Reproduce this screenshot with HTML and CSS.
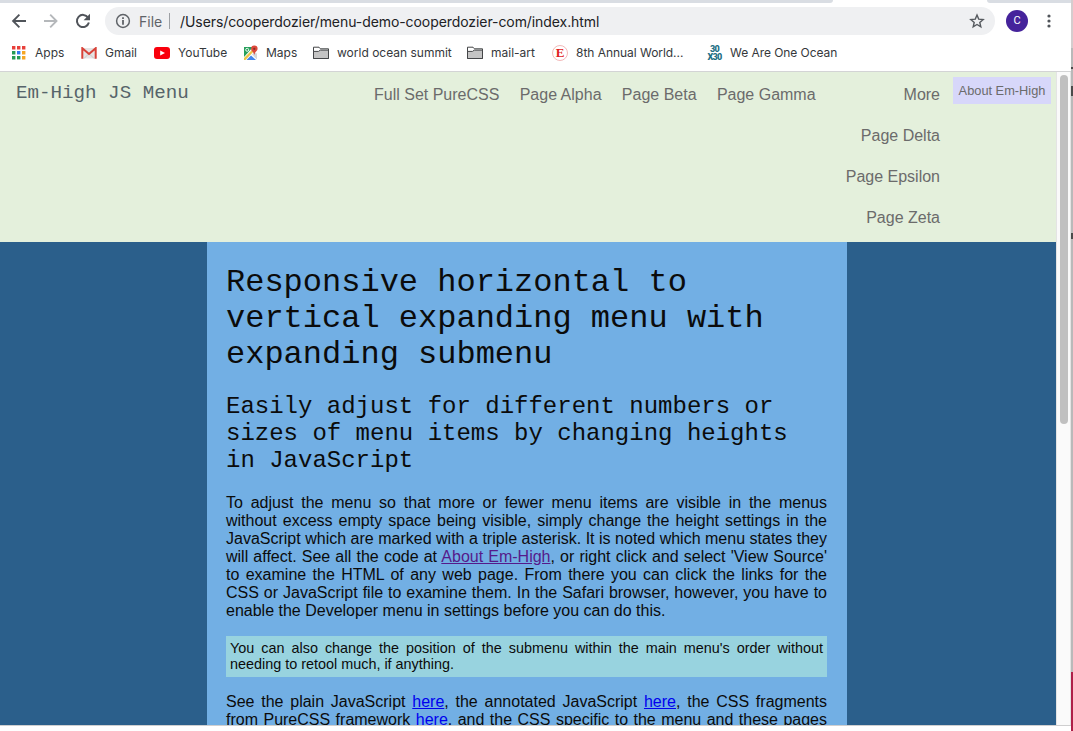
FILE: index.html
```
<!DOCTYPE html>
<html lang="en">
<head>
<meta charset="utf-8">
<title>Em-High JS Menu</title>
<link rel="stylesheet" href="styles.css">
</head>
<body>
<div class="desktop">
<div class="window">
  <div class="tabs"><span class="tab-left"></span><span class="tab-right"></span></div>
  <div class="toolbar">
    <svg class="nav-icon" width="16" height="16" viewBox="0 0 16 16" fill="none" stroke="#50545a" stroke-width="1.9"><path d="M15 8H2.6M8.4 1.7 2.1 8l6.3 6.3"/></svg>
    <svg class="nav-icon" width="16" height="16" viewBox="0 0 16 16" fill="none" stroke="#b5b8bb" stroke-width="1.9"><path d="M1 8h12.4M7.2 1.7 13.5 8l-6.3 6.3"/></svg>
    <svg class="nav-icon" width="16" height="16" viewBox="0 0 16 16" fill="none" stroke="#50545a" stroke-width="2"><path d="M13.1 4.6A6.1 6.1 0 1 0 13.9 9.6"/><path d="M15 .8v6.4H8.6z" fill="#50545a" stroke="none"/></svg>
    <div class="address">
      <svg width="16" height="16" viewBox="0 0 16 16" fill="none" stroke="#5f6368" stroke-width="1.5"><circle cx="8" cy="8" r="6.4"/><path d="M8 7v4.7M8 4.2v1.7" stroke-width="1.8"/></svg>
      <span class="scheme">File</span><span class="divider"></span><span class="path">/Users/cooperdozier/menu-demo-cooperdozier-com/index.html</span>
      <svg class="star" width="16" height="16" viewBox="0 0 16 16" fill="none" stroke="#55595e" stroke-width="1.4"><path d="m8 2 1.7 4.1 4.5.4-3.4 3 1 4.3L8 11.5l-3.8 2.3 1-4.3-3.4-3 4.5-.4z"/></svg>
    </div>
    <span class="avatar">C</span>
    <svg class="dots" width="4" height="14" viewBox="0 0 4 14" fill="#50545a"><circle cx="2" cy="2" r="1.6"/><circle cx="2" cy="7" r="1.6"/><circle cx="2" cy="12" r="1.6"/></svg>
  </div>
  <div class="bookmarks">
    <a class="bm apps"><svg width="14" height="14" viewBox="0 0 14 14"><path fill="#e8403a" d="M0 0h3.4v3.4H0zM5 0h3.4v3.4H5zM10 0h3.4v3.4H10z"/><path fill="#259b53" d="M0 5h3.4v3.4H0zM0 10h3.4v3.4H0z"/><path fill="#3079ed" d="M5 5h3.4v3.4H5z"/><path fill="#f5a623" d="M10 5h3.4v3.4H10zM10 10h3.4v3.4H10z"/><path fill="#259b53" d="M5 10h3.4v3.4H5z"/></svg><span>Apps</span></a>
    <a class="bm gmail"><svg width="16" height="12" viewBox="0 0 16 12"><path fill="#e6e4e4" d="M1 1h14v10.5H1z"/><path d="M3 11.5 8 6.5l5 5" stroke="#c9c6c6" fill="none"/><path fill="none" stroke="#d84339" stroke-width="2" d="M1.3 11.8V1.2L8 7l6.7-5.8v10.6"/></svg><span>Gmail</span></a>
    <a class="bm youtube"><svg width="16" height="12" viewBox="0 0 16 12"><rect width="16" height="12" rx="3" fill="#f9000c"/><path d="M6.2 3.4v5.2L11 6z" fill="#fff"/></svg><span>YouTube</span></a>
    <a class="bm maps"><svg width="16" height="16" viewBox="0 0 16 16"><path fill="#fff" d="M1 2h13v13H1z"/><path fill="#27a05b" d="M1 2h9L1 12z"/><path fill="#edc547" d="m1 13 9-9 1.6 1.6L2.5 15H1z"/><path fill="#4385eb" d="M3.5 15 8 10.4l5 4.6z"/><path fill="#d5d7d9" d="m9 9.5 2-2 3 1v6z"/><circle cx="4.2" cy="4.8" r="1.5" fill="none" stroke="#fff" stroke-width=".9"/><path fill="#dc493b" d="M11.3.5a3.3 3.3 0 0 0-3.2 3.3C8 6 10.8 6.7 11.3 10c.6-3.3 3.3-4 3.3-6.2A3.3 3.3 0 0 0 11.3.5z"/><circle cx="11.3" cy="3.8" r="1.1" fill="#872c26"/></svg><span>Maps</span></a>
    <a class="bm ocean"><svg width="16" height="14" viewBox="0 0 16 14"><path fill="#fff" stroke="#444648" d="M.5 12.5V1.2H6l1.4 1.6h8.1v9.7z"/><path fill="#c4c4c4" stroke="#444648" d="M.5 12.5V5.4h5l1.8-1.3h8.2v8.4z"/></svg><span>world ocean summit</span></a>
    <a class="bm mailart"><svg width="16" height="14" viewBox="0 0 16 14"><path fill="#fff" stroke="#444648" d="M.5 12.5V1.2H6l1.4 1.6h8.1v9.7z"/><path fill="#c4c4c4" stroke="#444648" d="M.5 12.5V5.4h5l1.8-1.3h8.2v8.4z"/></svg><span>mail-art</span></a>
    <a class="bm annual"><i class="e-logo">E</i><span>8th Annual World...</span></a>
    <a class="bm oneocean"><i class="x-logo"><b>30</b><b>X30</b></i><span>We Are One Ocean</span></a>
  </div>
  <div class="viewport">
    <div class="page">
      <header class="menu">
        <a class="brand">Em-High JS Menu</a>
        <nav class="links"><a>Full Set PureCSS</a><a>Page Alpha</a><a>Page Beta</a><a>Page Gamma</a></nav>
        <nav class="more"><a>More</a><a>Page Delta</a><a>Page Epsilon</a><a>Page Zeta</a></nav>
        <a class="about">About Em-High</a>
      </header>
      <main class="content">
        <h1>Responsive horizontal to vertical expanding menu with expanding submenu</h1>
        <h2>Easily adjust for different numbers or sizes of menu items by changing heights in JavaScript</h2>
        <p>To adjust the menu so that more or fewer menu items are visible in the menus without excess empty space being visible, simply change the height settings in the JavaScript which are marked with a triple asterisk. It is noted which menu states they will affect. See all the code at <a class="visited" href="#">About Em-High</a>, or right click and select 'View Source' to examine the HTML of any web page. From there you can click the links for the CSS or JavaScript file to examine them. In the Safari browser, however, you have to enable the Developer menu in settings before you can do this.</p>
        <p class="note">You can also change the position of the submenu within the main menu's order without needing to retool much, if anything.</p>
        <p>See the plain JavaScript <a class="fresh" href="#">here</a>, the annotated JavaScript <a class="fresh" href="#">here</a>, the CSS fragments from PureCSS framework <a class="fresh" href="#">here</a>, and the CSS specific to the menu and these pages</p>
      </main>
    </div>
    <div class="scrollbar"><div class="thumb"></div></div>
  </div>
</div>
<div class="behind"><div class="behind-top"></div><div class="behind-mid"><i class="m1"></i><i class="m2"></i><i class="m3"></i></div><div class="behind-red"></div></div>
</div>
</body>
</html>
```
FILE: styles.css
```
* { box-sizing: border-box; }
body { margin: 0; background: #fff; font-family: "Liberation Sans", Arial, sans-serif; }
.desktop { display: flex; width: 1073px; height: 731px; overflow: hidden; }
.window { width: 1071px; height: 731px; display: flex; flex-direction: column; background: #fff; }
.tabs { height: 3px; display: flex; justify-content: space-between; }
.tab-left { width: 833px; background: #d9dde3; border-radius: 0 0 4px 0; }
.tab-right { width: 84px; background: #d9dde3; border-radius: 0 0 0 4px; }

.toolbar { height: 36px; padding-left: 11px; display: flex; align-items: center; }
.nav-icon { margin-right: 16px; flex: none; }
.address { width: 890px; height: 28px; margin-left: -2px; padding: 0 10px; border-radius: 14px; background: #eff0f2; display: flex; align-items: center; font: 14px Inter, sans-serif; color: #202124; }
.address svg { flex: none; }
.scheme { width: 30px; margin-left: 8px; color: #5f6368; }
.divider { width: 1px; height: 16px; background: #9da0a4; }
.path { margin-left: 10px; white-space: nowrap; letter-spacing: -.075px; }
.address .star { margin-left: auto; }
.avatar { width: 22px; height: 22px; margin-left: 11px; border-radius: 50%; background: #45239b; color: #fff; font: 11px/22px Roboto, sans-serif; text-align: center; }
.dots { margin-left: 19px; }

.bookmarks { height: 32px; padding: 0 0 5px 12px; display: flex; align-items: center; font: 12px Inter, sans-serif; color: #35383b; }
.bm { display: flex; align-items: center; white-space: nowrap; flex: none; }
.bm span { margin-top: -1px; }
.bm svg, .bm i { flex: none; }
.apps { width: 69px; gap: 9px; }
.gmail { width: 73px; gap: 8px; }
.youtube { width: 89px; gap: 8px; }
.maps { width: 70px; gap: 7px; }
.ocean { width: 154px; gap: 8px; }
.mailart { width: 85px; gap: 8px; }
.annual { width: 155px; gap: 8px; letter-spacing: -.04px; }
.oneocean { gap: 8px; letter-spacing: -.06px; }
.e-logo { width: 16px; height: 16px; border: 1px solid #f3b9b9; border-radius: 50%; color: #e02020; font: bold 13px/14px "Liberation Serif", serif; text-align: center; }
.x-logo { width: 15px; display: flex; flex-direction: column; align-items: center; color: #1f7085; font: bold 9px/8px Roboto, sans-serif; letter-spacing: -.7px; }

.viewport { height: 655px; border-top: 1px solid #d3d4d5; border-bottom: 1px solid #cfcfd0; display: flex; }
.page { width: 1056px; height: 653px; overflow: hidden; background: #2b5f8b; }
.scrollbar { width: 15px; padding: 3px 3px 0; background: #fafafa; border-left: 1px solid #e4e4e4; border-right: 1px solid #e4e4e4; }
.thumb { width: 8px; height: 349px; border-radius: 4px; background: #c0c0c0; }

.menu { height: 170px; padding: 0 5px 0 16px; display: flex; background: #e4f0dc; color: #6b6b6b; font-size: 16px; }
.brand { width: 358px; padding-top: 10px; font: 19.2px/22px "Liberation Mono", monospace; color: #56646a; }
.links { width: 442px; padding-top: 2px; display: flex; gap: 20.3px; line-height: 41px; white-space: nowrap; }
.more { width: 124px; padding-top: 2px; display: flex; flex-direction: column; text-align: right; line-height: 41px; }
.about { width: 98px; height: 27px; margin: 5px 0 0 13px; background: #d7d7fa; font-size: 12.8px; line-height: 27px; text-align: center; white-space: nowrap; }

.content { width: 640px; height: 490px; margin-left: 207px; padding: 23px 20px 0 19px; background: #72afe4; color: #0b0b0b; }
h1, h2 { margin: 0; font-family: "Liberation Mono", monospace; font-weight: 400; }
h1 { font-size: 32px; line-height: 36px; }
h2 { margin: 20px 0; font-size: 24px; line-height: 27px; }
p { margin: 16px 0; font-size: 16px; line-height: 18px; text-align: justify; }
p.note { padding: 4px 4px 5px; background: #98d3df; font-size: 14.4px; line-height: 16px; }
p:last-child { text-align-last: justify; }
.visited { color: #551a8b; }
.fresh { color: #0000ee; }

.behind { width: 2px; display: flex; flex-direction: column; }
.behind-top { height: 48px; background: #d5cdce; }
.behind-mid { height: 624px; background: #b9b9b9; position: relative; }
.behind-mid i { position: absolute; left: 0; width: 2px; background: #4b4b4b; }
.m1 { top: 19px; height: 2px; }
.m2 { top: 38px; height: 10px; }
.m3 { top: 185px; height: 6px; }
.behind-red { height: 59px; background: #ae1f48; }
```
